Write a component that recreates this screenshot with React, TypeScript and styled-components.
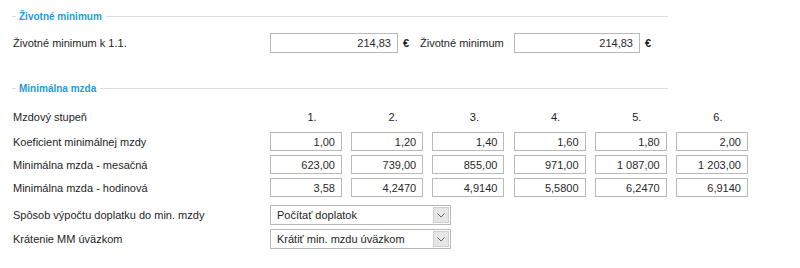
import React from "react";
import styled, { createGlobalStyle } from "styled-components";

const Global = createGlobalStyle`
  html, body { margin: 0; padding: 0; background: #fff; }
  body { font-family: "Liberation Sans", Arial, sans-serif; font-size: 11px; color: #1e1e1e; }
`;

const Page = styled.div`
  width: 800px;
  height: 268px;
  padding: 8px 0 0 12px;
  box-sizing: border-box;
`;

const Section = styled.section<{ $gap: number }>`
  width: 656px;
  margin-bottom: ${(p) => p.$gap}px;
`;

const Legend = styled.div`
  display: flex;
  align-items: center;
  height: 16px;
  &::before {
    content: "";
    width: 4px;
    border-top: 1px solid #dcdcdc;
    margin-right: 3px;
  }
  &::after {
    content: "";
    flex: 1;
    border-top: 1px solid #dcdcdc;
    margin-left: 4px;
  }
`;

const LegendText = styled.span`
  color: #2a9ad6;
  font-weight: bold;
  font-size: 10px;
`;

const Row = styled.div<{ $h: number; $mt?: number }>`
  display: flex;
  align-items: center;
  height: ${(p) => p.$h}px;
  margin-top: ${(p) => p.$mt ?? 0}px;
`;

const Label = styled.div<{ $w: number }>`
  width: ${(p) => p.$w}px;
  padding-left: 1px;
  box-sizing: border-box;
  flex-shrink: 0;
  white-space: nowrap;
`;

const Input = styled.div<{ $w: number; $h?: number }>`
  width: ${(p) => p.$w}px;
  height: ${(p) => p.$h ?? 19}px;
  box-sizing: border-box;
  border: 1px solid #b9b9b9;
  background: #fff;
  display: flex;
  align-items: center;
  justify-content: flex-end;
  padding-right: 6px;
  flex-shrink: 0;
  color: #2a2a2a;
`;

const Unit = styled.span<{ $w: number }>`
  width: ${(p) => p.$w}px;
  padding-left: 5px;
  box-sizing: border-box;
  flex-shrink: 0;
  font-weight: bold;
`;

const Cells = styled.div`
  display: flex;
  gap: 9.2px;
`;

const ColHead = styled.div`
  width: 72px;
  text-align: center;
  padding-left: 12px;
  box-sizing: border-box;
`;

const Select = styled.div`
  width: 181px;
  height: 20px;
  box-sizing: border-box;
  border: 1px solid #b9b9b9;
  background: #fff;
  display: flex;
  align-items: center;
  padding: 1px;
`;

const SelectText = styled.span`
  flex: 1;
  padding-left: 5px;
`;

const Arrow = styled.div`
  width: 16px;
  height: 16px;
  background: #e6e6e6;
  border: 1px solid #cfcfcf;
  box-sizing: border-box;
  display: flex;
  align-items: center;
  justify-content: center;
`;

const Chevron = () => (
  <svg width="8" height="5" viewBox="0 0 8 5">
    <path d="M0.5 0.5 L4 4 L7.5 0.5" fill="none" stroke="#6a6a6a" strokeWidth="1" />
  </svg>
);

const cols = ["1.", "2.", "3.", "4.", "5.", "6."];
const rows: { label: string; values: string[] }[] = [
  { label: "Koeficient minimálnej mzdy", values: ["1,00", "1,20", "1,40", "1,60", "1,80", "2,00"] },
  { label: "Minimálna mzda - mesačná", values: ["623,00", "739,00", "855,00", "971,00", "1 087,00", "1 203,00"] },
  { label: "Minimálna mzda - hodinová", values: ["3,58", "4,2470", "4,9140", "5,5800", "6,2470", "6,9140"] },
];

export default function App() {
  return (
    <Page>
      <Global />
      <Section $gap={27}>
        <Legend>
          <LegendText>Životné minimum</LegendText>
        </Legend>
        <Row $h={20} $mt={9}>
          <Label $w={258}>Životné minimum k 1.1.</Label>
          <Input $w={128} $h={20}>214,83</Input>
          <Unit $w={21}>€</Unit>
          <Label $w={95}>Životné minimum</Label>
          <Input $w={126} $h={20}>214,83</Input>
          <Unit $w={18}>€</Unit>
        </Row>
      </Section>
      <Section $gap={0}>
        <Legend>
          <LegendText>Minimálna mzda</LegendText>
        </Legend>
        <Row $h={16} $mt={13}>
          <Label $w={258}>Mzdový stupeň</Label>
          <Cells>
            {cols.map((c) => (
              <ColHead key={c}>{c}</ColHead>
            ))}
          </Cells>
        </Row>
        {rows.map((r, i) => (
          <Row key={r.label} $h={19} $mt={i === 0 ? 7 : 4}>
            <Label $w={258}>{r.label}</Label>
            <Cells>
              {r.values.map((v, j) => (
                <Input key={j} $w={72}>{v}</Input>
              ))}
            </Cells>
          </Row>
        ))}
        <Row $h={20} $mt={8}>
          <Label $w={258}>Spôsob výpočtu doplatku do min. mzdy</Label>
          <Select>
            <SelectText>Počítať doplatok</SelectText>
            <Arrow>
              <Chevron />
            </Arrow>
          </Select>
        </Row>
        <Row $h={20} $mt={4}>
          <Label $w={258}>Krátenie MM úväzkom</Label>
          <Select>
            <SelectText>Krátiť min. mzdu úväzkom</SelectText>
            <Arrow>
              <Chevron />
            </Arrow>
          </Select>
        </Row>
      </Section>
    </Page>
  );
}
